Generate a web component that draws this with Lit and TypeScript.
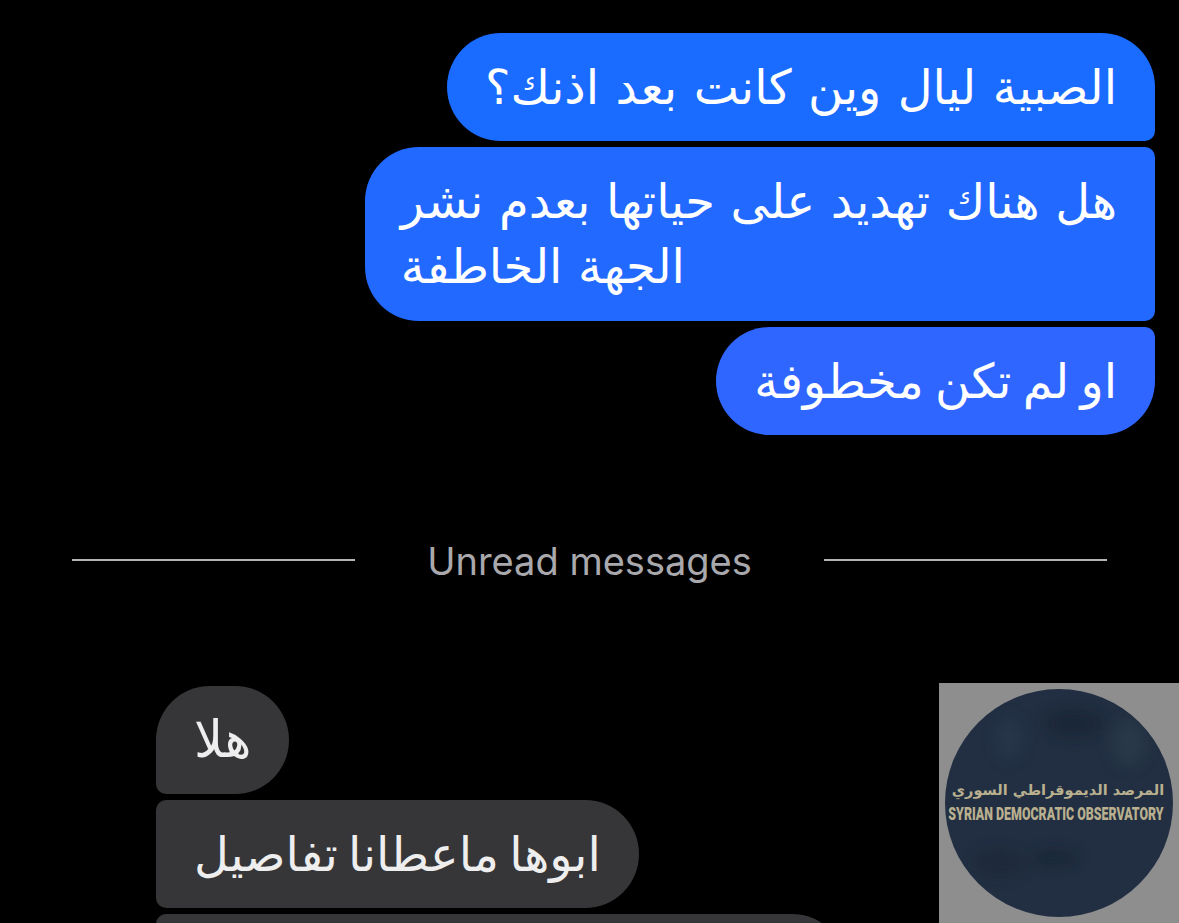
import { LitElement, html, css } from "lit";
import { customElement } from "lit/decorators.js";

@customElement("app-root")
export class AppRoot extends LitElement {
  static styles = css`
    :host { display: block; width: 1179px; height: 923px; overflow: hidden; background: #000; }
    .page { display: flex; flex-direction: column; padding-top: 33px; font-family: "DejaVu Sans", "Noto Sans", sans-serif; }
    .sent { display: flex; flex-direction: column; align-items: flex-end; gap: 6px; padding-right: 24px; }
    .b { box-sizing: border-box; direction: rtl; font-size: 48px; line-height: 64px; padding: 22px 38px; white-space: nowrap; word-spacing: -5px; }
    .sent .b { color: #fff; }
    .sent .first { background: #1a6bff; border-radius: 54px 54px 10px 54px; word-spacing: 1.2px; }
    .sent .two { background: #2269ff; border-radius: 54px 10px 10px 54px; padding: 22px 38px 22px 36px; line-height: 65px; text-align: left; word-spacing: 0.4px; }
    .sent .last { background: #2f66ff; border-radius: 54px 10px 54px 54px; word-spacing: -4px; }
    .divider { display: flex; align-items: center; justify-content: space-between; padding: 0 72px; margin-top: 106px; height: 40px; }
    .line { width: 283px; height: 2px; margin-top: -2px; background: #b4b4b6; }
    .label { font-family: Inter, "Noto Sans", sans-serif; font-size: 38px; line-height: 40px; color: #a9a9ad; }
    .bottom { display: flex; justify-content: space-between; align-items: flex-start; margin-top: 102px; padding-left: 156px; }
    .recv { display: flex; flex-direction: column; align-items: flex-start; gap: 6px; padding-top: 3px; }
    .recv .b { background: #363638; color: #eeeeef; border-radius: 10px 54px 54px 10px; }
    .recv .b.first { border-radius: 54px 54px 54px 10px; font-size: 51px; padding: 22px 38px; }
    .recv .b.third { width: 690px; height: 120px; }
    .avatar { display: block; width: 240px; height: 240px; flex: none; }
  `;
  render() {
    return html`<div class="page">
      <div class="sent">
        <div class="b first">الصبية ليال وين كانت بعد اذنك؟</div>
        <div class="b two">هل هناك تهديد على حياتها بعدم نشر<br />الجهة الخاطفة</div>
        <div class="b last">او لم تكن مخطوفة</div>
      </div>
      <div class="divider">
        <div class="line"></div>
        <div class="label">Unread messages</div>
        <div class="line"></div>
      </div>
      <div class="bottom">
        <div class="recv">
          <div class="b first">هلا</div>
          <div class="b">ابوها ماعطانا تفاصيل</div>
          <div class="b third"></div>
        </div>
        <svg class="avatar" viewBox="0 0 240 240">
          <defs>
            <filter id="blur" x="-50%" y="-50%" width="200%" height="200%"><feGaussianBlur stdDeviation="7" /></filter>
            <clipPath id="disc"><circle cx="120" cy="120" r="114" /></clipPath>
          </defs>
          <rect width="240" height="240" fill="#8e8e8e" />
          <circle cx="120" cy="120" r="114" fill="#222f42" />
          <g clip-path="url(#disc)" filter="url(#blur)" opacity="0.6">
            <ellipse cx="135" cy="40" rx="30" ry="14" fill="#182230" />
            <ellipse cx="70" cy="55" rx="14" ry="22" fill="#2c3a4f" />
            <ellipse cx="190" cy="60" rx="18" ry="24" fill="#2e3c50" />
            <ellipse cx="115" cy="175" rx="24" ry="8" fill="#162030" />
            <ellipse cx="60" cy="180" rx="24" ry="14" fill="#1b2636" />
          </g>
          <text x="119" y="112" text-anchor="middle" direction="rtl" font-family="DejaVu Sans" font-weight="bold" font-size="14.5" fill="#b9b08f">المرصد الديموقراطي السوري</text>
          <g transform="translate(117 137) scale(1 1.45)">
            <text x="0" y="0" text-anchor="middle" font-family="Roboto" font-weight="900" font-size="12.4" fill="#b9b08f">SYRIAN DEMOCRATIC OBSERVATORY</text>
          </g>
        </svg>
      </div>
    </div>`;
  }
}
